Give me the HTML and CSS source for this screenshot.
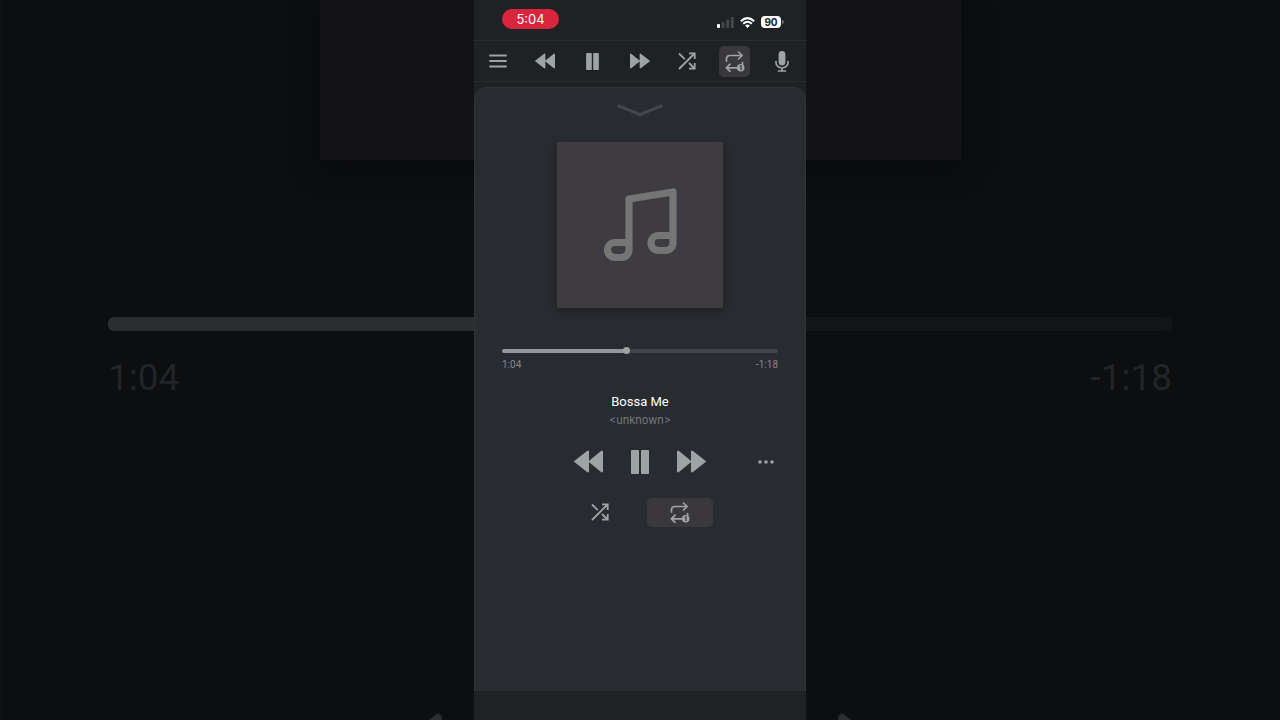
FILE: index.html
```
<!DOCTYPE html>
<html lang="en">
<head>
  <meta charset="UTF-8">
  <meta name="viewport" content="width=device-width, initial-scale=1">
  <title>Bossa Me</title>
  <link rel="stylesheet" href="styles.css">
</head>
<body>

  <!-- shared icons -->
  <svg class="sprite" aria-hidden="true">
    <symbol id="rewind" viewBox="0 0 28 22">
      <path d="M1.200 11L13.500 1.500V20.500ZM15.200 11L27 1.500V20.500Z" fill="currentColor" stroke="currentColor" stroke-width="2" stroke-linejoin="round"/>
    </symbol>
    <symbol id="forward" viewBox="0 0 28 22">
      <path d="M26.800 11L14.500 1.500V20.500ZM12.800 11L1 1.500V20.500Z" fill="currentColor" stroke="currentColor" stroke-width="2" stroke-linejoin="round"/>
    </symbol>
    <symbol id="pause" viewBox="0 0 18 24">
      <rect width="8" height="24" rx="1" fill="currentColor"/>
      <rect x="10" width="8" height="24" rx="1" fill="currentColor"/>
    </symbol>
    <symbol id="shuffle" viewBox="0 0 18 18">
      <path d="M1 17L16.500 1.500M11 1.300H16.700V7M1 1.500L6.800 7.200M11 11L16.500 16.500M16.700 11V16.700H11" fill="none" stroke="currentColor" stroke-width="1.800"/>
    </symbol>
    <symbol id="repeat" viewBox="0 0 20 21">
      <g fill="none" stroke="currentColor" stroke-width="1.700" stroke-linecap="round" stroke-linejoin="round">
        <path d="M1.500 10V8Q1.500 4.500 5 4.500H17M13.500 1L17.200 4.500L13.500 8"/>
        <path d="M13 16.800H1.500M5 13.200L1.400 16.800L5 20.300M17.500 11.500V14"/>
      </g>
      <circle cx="15.700" cy="16.800" r="3.800" fill="currentColor"/>
      <path class="repeat-mark" d="M14.900 15.500L16 14.800V19" fill="none" stroke-width="1.200"/>
    </symbol>
  </svg>

  <div class="backdrop" aria-hidden="true">
    <div class="backdrop-art"></div>
    <div class="backdrop-track"></div>
    <div class="backdrop-times"><span>1:04</span><span>-1:18</span></div>
    <div class="backdrop-controls">
      <svg><use href="#rewind"/></svg>
      <svg><use href="#forward"/></svg>
    </div>
  </div>

  <main class="phone">
    <header class="status">
      <span class="clock">5:04</span>
      <div class="indicators">
        <svg class="signal" viewBox="0 0 17 11">
          <rect y="7" width="3" height="4" rx="1" fill="#fff"/>
          <g fill="#45494c">
            <rect x="4.600" y="5" width="3" height="6" rx="1"/>
            <rect x="9.200" y="2.500" width="3" height="8.500" rx="1"/>
            <rect x="13.800" width="3" height="11" rx="1"/>
          </g>
        </svg>
        <svg class="wifi" viewBox="0 0 15 11">
          <g fill="none" stroke="#fff" stroke-width="2">
            <path d="M.8 4.200Q7.500-2 14.200 4.200"/>
            <path d="M3.200 6.700Q7.500 2.700 11.800 6.700"/>
          </g>
          <path d="M5.100 8.400Q7.500 6.400 9.900 8.400L7.500 11Z" fill="#fff"/>
        </svg>
        <span class="battery">90</span>
      </div>
    </header>

    <nav class="toolbar">
      <button class="tool" aria-label="Menu">
        <svg class="icon-menu" viewBox="0 0 18 14"><path d="M1 1.500H17M1 7H17M1 12.500H17" stroke="currentColor" stroke-width="1.800" stroke-linecap="round"/></svg>
      </button>
      <button class="tool" aria-label="Previous"><svg class="icon-skip"><use href="#rewind"/></svg></button>
      <button class="tool" aria-label="Pause"><svg class="icon-pause"><use href="#pause"/></svg></button>
      <button class="tool" aria-label="Next"><svg class="icon-skip"><use href="#forward"/></svg></button>
      <button class="tool" aria-label="Shuffle"><svg class="icon-shuffle"><use href="#shuffle"/></svg></button>
      <button class="tool active" aria-label="Repeat one"><svg class="icon-repeat"><use href="#repeat"/></svg></button>
      <button class="tool" aria-label="Voice">
        <svg class="icon-mic" viewBox="0 0 14 21">
          <rect x="3.600" width="6.800" height="14.500" rx="3.400" fill="currentColor"/>
          <path d="M1 10.500V11.500A6 5.500 0 0 0 13 11.500V10.500M7 17V20M3.500 20H10.500" fill="none" stroke="currentColor" stroke-width="1.700" stroke-linecap="round"/>
        </svg>
      </button>
    </nav>

    <section class="sheet">
      <button class="collapse" aria-label="Close player">
        <svg viewBox="0 0 48 14"><path d="M3 3L24 11.500L45 3" fill="none" stroke="currentColor" stroke-width="3.500" stroke-linecap="round" stroke-linejoin="round"/></svg>
      </button>

      <div class="art">
        <svg viewBox="0 0 74 74">
          <path d="M26 54.500H12A7.500 7.500 0 0 0 12 69.500H18.500A7.500 7.500 0 0 0 26 62V11L70 4V55A7.500 7.500 0 0 1 62.500 62.500H55.500A7.500 7.500 0 0 1 55.500 47.500H70" fill="none" stroke="currentColor" stroke-width="7.200" stroke-linejoin="round"/>
        </svg>
      </div>

      <input class="seek" type="range" min="0" max="142" value="64" aria-label="Position" style="--played: 45%">
      <div class="times"><span>1:04</span><span>-1:18</span></div>

      <h1 class="title">Bossa Me</h1>
      <p class="artist">&lt;unknown&gt;</p>

      <div class="controls">
        <div class="playback">
          <button aria-label="Previous"><svg class="icon-skip-lg"><use href="#rewind"/></svg></button>
          <button aria-label="Pause"><svg class="icon-pause-lg"><use href="#pause"/></svg></button>
          <button aria-label="Next"><svg class="icon-skip-lg"><use href="#forward"/></svg></button>
        </div>
        <button class="more" aria-label="More">
          <svg viewBox="0 0 16 4" fill="currentColor"><circle cx="2" cy="2" r="1.800"/><circle cx="8" cy="2" r="1.800"/><circle cx="14" cy="2" r="1.800"/></svg>
        </button>
      </div>

      <div class="modes">
        <button aria-label="Shuffle"><svg class="icon-shuffle"><use href="#shuffle"/></svg></button>
        <button class="active" aria-label="Repeat one"><svg class="icon-repeat"><use href="#repeat"/></svg></button>
      </div>
    </section>
  </main>

</body>
</html>
```

FILE: styles.css
```
* {
  box-sizing: border-box;
}
body {
  margin: 0;
  min-height: 100vh;
  display: flex;
  justify-content: center;
  position: relative;
  overflow: hidden;
  background: #0c0e10;
  color: #9ea3a6;
  font-family: Inter, "Liberation Sans", sans-serif;
}
button {
  display: flex;
  align-items: center;
  justify-content: center;
  padding: 0;
  border: 0;
  background: none;
  color: inherit;
}
svg {
  display: block;
}
.sprite {
  position: absolute;
  width: 0;
  height: 0;
}

/* enlarged player behind the phone */
.backdrop {
  position: absolute;
  inset: 0;
  overflow: hidden;
  padding: 0 108px 0 106px;
  border-left: 2px solid #0f1113;
}
.backdrop-art {
  width: 641px;
  max-width: 100%;
  height: 160px;
  margin: 0 auto 157px;
  background: #131315;
  box-shadow: 0 8px 24px #090a0c;
}
.backdrop-track {
  height: 14px;
  border-radius: 6px;
  background: linear-gradient(to right, #2c2d2f 45%, #141517 45%);
}
.backdrop-times {
  display: flex;
  justify-content: space-between;
  margin-top: 25px;
  font-family: Roboto, sans-serif;
  font-size: 37px;
  line-height: 44px;
  color: #232426;
}
.backdrop-controls {
  display: flex;
  justify-content: center;
  gap: 290px;
  margin-top: 312px;
  color: #2c2d2f;
}
.backdrop-controls svg {
  width: 110px;
  height: 86px;
}

.phone {
  position: relative;
  width: 100%;
  max-width: 332px;
  min-height: 100vh;
  display: flex;
  flex-direction: column;
  padding-bottom: 29px;
  background: #1e2224;
}
.status {
  display: flex;
  justify-content: space-between;
  height: 41px;
  padding: 9px 25px 0 28px;
  border-bottom: 1px solid #282c2f;
}
.clock {
  width: 57px;
  height: 20px;
  border-radius: 10px;
  background: #d9253e;
  color: #fff;
  font-size: 13px;
  line-height: 20px;
  text-align: center;
}
.indicators {
  display: flex;
  align-items: center;
  gap: 6px;
  height: 26px;
}
.signal {
  width: 17px;
  height: 11px;
}
.wifi {
  width: 15px;
  height: 11px;
}
.battery {
  position: relative;
  width: 20px;
  height: 12px;
  border-radius: 4px;
  background: #fff;
  color: #1e2224;
  font-size: 10px;
  font-weight: 700;
  line-height: 12px;
  text-align: center;
}
.battery::after {
  content: "";
  position: absolute;
  left: 21px;
  top: 4px;
  width: 2px;
  height: 4px;
  border-radius: 0 2px 2px 0;
  background: #65686a;
}

.toolbar {
  display: grid;
  grid-template-columns: repeat(7, 1fr);
  justify-items: center;
  align-items: center;
  height: 41px;
  margin-bottom: 5px;
  border-bottom: 1px solid #282c2f;
}
.tool {
  width: 31px;
  height: 31px;
  border-radius: 5px;
}
.active {
  background: #3a383d;
}
.repeat-mark {
  stroke: #3a383d;
}
.icon-menu {
  width: 18px;
  height: 14px;
}
.icon-skip {
  width: 20px;
  height: 16px;
}
.icon-pause {
  width: 13px;
  height: 17px;
}
.icon-shuffle {
  width: 18px;
  height: 18px;
}
.icon-repeat {
  width: 20px;
  height: 21px;
}
.icon-mic {
  width: 14px;
  height: 21px;
}

.sheet {
  flex: 1;
  display: flex;
  flex-direction: column;
  padding: 15px 27px;
  border: 1px solid #303437;
  border-bottom: 0;
  border-radius: 13px 13px 0 0;
  background: #282b2f;
}
.collapse {
  align-self: center;
  color: #424549;
}
.collapse svg {
  width: 48px;
  height: 14px;
}
.art {
  align-self: center;
  display: flex;
  align-items: center;
  justify-content: center;
  width: 60%;
  aspect-ratio: 1;
  margin: 25px 0 39px;
  background: #3e3c41;
  color: #757575;
  box-shadow: 0 3px 8px rgba(0, 0, 0, 0.25);
}
.art svg {
  width: 74px;
  height: 74px;
}

.seek {
  -webkit-appearance: none;
  appearance: none;
  width: 100%;
  height: 8px;
  margin: 0;
  background: none;
}
.seek::-webkit-slider-runnable-track {
  height: 4px;
  border-radius: 2px;
  background: linear-gradient(to right, #94989b var(--played), #414549 var(--played));
}
.seek::-webkit-slider-thumb {
  -webkit-appearance: none;
  width: 7px;
  height: 7px;
  margin-top: -2px;
  border-radius: 50%;
  background: #9ea3a6;
}
.times {
  display: flex;
  justify-content: space-between;
  margin-top: 4px;
  font-family: Roboto, sans-serif;
  font-size: 10px;
  line-height: 12px;
  color: #85898c;
}
.title {
  margin: 22px 0 0;
  font-family: Roboto, sans-serif;
  font-size: 13px;
  font-weight: 400;
  line-height: 18px;
  text-align: center;
  color: #fff;
}
.artist {
  margin: 0;
  font-size: 11px;
  line-height: 18px;
  text-align: center;
  color: #777b7e;
}

.controls {
  display: grid;
  grid-template-columns: 1fr auto 1fr;
  align-items: center;
  margin-top: 21px;
}
.playback {
  grid-column: 2;
  display: flex;
  gap: 28px;
}
.icon-skip-lg {
  width: 29px;
  height: 23px;
}
.icon-pause-lg {
  width: 18px;
  height: 24px;
}
.more {
  justify-self: end;
  width: 24px;
  height: 24px;
}
.more svg {
  width: 16px;
  height: 4px;
}
.modes {
  display: flex;
  justify-content: center;
  gap: 14px;
  margin-top: 24px;
}
.modes button {
  width: 66px;
  height: 29px;
  border-radius: 5px;
}
```
